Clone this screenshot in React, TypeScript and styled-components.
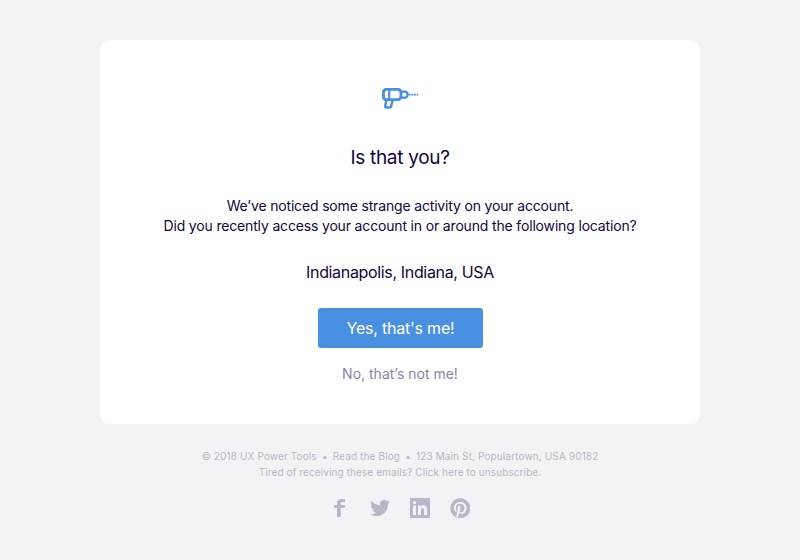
import React from "react";
import styled, { createGlobalStyle } from "styled-components";
import { FaTwitter, FaPinterest } from "react-icons/fa";

const GlobalStyle = createGlobalStyle`
  * { box-sizing: border-box; }
  body {
    margin: 0;
    background: #f3f3f5;
    color: #130540;
    font-family: Inter, "Liberation Sans", sans-serif;
  }
`;

const Page = styled.div`
  display: flex;
  flex-direction: column;
  align-items: center;
  height: 560px;
  padding-top: 40px;
  overflow: hidden;
`;

const Card = styled.main`
  display: flex;
  flex-direction: column;
  align-items: center;
  width: 600px;
  height: 384px;
  padding-top: 44px;
  background: #fff;
  border-radius: 10px;
`;

const Drill = styled.svg`
  display: block;
  width: 40px;
  height: 28px;
`;

const Line = styled.p<{ $size: number; $height: number; $top?: number; $spacing?: number }>`
  margin: ${({ $top = 0 }) => $top}px 0 0;
  font-size: ${({ $size }) => $size}px;
  font-weight: 400;
  line-height: ${({ $height }) => $height}px;
  letter-spacing: ${({ $spacing = 0 }) => $spacing}px;
  white-space: pre;
`;

const Separator = styled.span`
  letter-spacing: -0.2px;
`;

const Confirm = styled.button`
  width: 165px;
  height: 40px;
  margin: 24px 0 0 1px;
  padding: 0;
  border: 0;
  border-radius: 3px;
  background: #4a90e2;
  color: #fff;
  font: 400 16px/40px Inter, sans-serif;
  letter-spacing: -0.22px;
`;

const Deny = styled.a`
  margin-top: 16px;
  color: #8c84a2;
  font-size: 14px;
  line-height: 20px;
`;

const Footer = styled.footer`
  display: flex;
  flex-direction: column;
  align-items: center;
  margin-top: 24px;
  color: #bab5c7;
`;

const Social = styled.nav`
  display: flex;
  gap: 20px;
  margin-top: 18px;
`;

const SocialLink = styled.a`
  display: flex;
  align-items: center;
  justify-content: center;
  width: 20px;
  height: 20px;
  svg { flex: none; }
`;

export default function App() {
  return (
    <Page>
      <GlobalStyle />
      <Card>
        <Drill viewBox="0 0 40 28" fill="none" stroke="#4a90e2" strokeWidth="2.9" strokeLinejoin="round">
          <path d="M5.3 5.4H18.8L21 7.6V13.4L18.8 15.6H5.3L3.5 13.8V7.2Z" />
          <path d="M9.2 5V16" strokeWidth="2.2" />
          <path d="M21.5 7.6H25.8L27.4 9.2V12L25.8 13.6H21.5" strokeWidth="2.4" />
          <path d="M6.4 16L5.3 21.8Q5.1 23.6 6.6 23.6H9.6Q10.8 23.6 11.1 22.2L12.7 16" strokeWidth="2.5" />
          <path d="M28.6 10.6H38.2" strokeWidth="1.6" strokeDasharray="1.9 .8" />
        </Drill>
        <Line as="h1" $size={19} $height={24} $top={34} $spacing={-0.3}>Is that you?</Line>
        <Line $size={14} $height={20} $top={26} $spacing={-0.165}>We’ve noticed some strange activity on your account.</Line>
        <Line $size={14} $height={20} $spacing={-0.165}>Did you recently access your account in or around the following location?</Line>
        <Line $size={16} $height={24} $top={24} $spacing={-0.34}>Indianapolis, Indiana, USA</Line>
        <Confirm>Yes, that's me!</Confirm>
        <Deny>No, that’s not me!</Deny>
      </Card>
      <Footer>
        <Line $size={10} $height={16} $spacing={0.13}>
          © 2018 UX Power Tools<Separator>{"  •  "}</Separator>Read the Blog<Separator>{"  •  "}</Separator>123 Main St, Populartown, USA 90182
        </Line>
        <Line $size={10} $height={16} $spacing={0.1}>Tired of receiving these emails? Click here to unsubscribe.</Line>
        <Social>
          <SocialLink>
            <svg width="20" height="20" viewBox="0 0 20 20" fill="currentColor">
              <path d="M7 19V10H4V6.9H7V5.1C7 2.5 8.6 1 11.3 1H15V4.1H12.5C11.3 4.1 10.7 4.7 10.7 5.7V6.9H15L14.6 10H10.7V19Z" />
            </svg>
          </SocialLink>
          <SocialLink><FaTwitter size={20} /></SocialLink>
          <SocialLink>
            <svg width="20" height="20" viewBox="0 0 20 20" fill="currentColor">
              <path fillRule="evenodd" d="M1 0H19Q20 0 20 1V19Q20 20 19 20H1Q0 20 0 19V1Q0 0 1 0ZM3 7.6V17H6V7.6ZM4.5 2.9A1.7 1.7 0 1 0 4.5 6.3A1.7 1.7 0 1 0 4.5 2.9ZM8 7.6V17H11V12.2C11 10.8 11.6 10 12.7 10C13.8 10 14.1 10.9 14.1 12.2V17H17V11.7C17 9 16.2 7.3 13.6 7.3C12.3 7.3 11.4 8 10.9 8.8V7.6Z" />
            </svg>
          </SocialLink>
          <SocialLink><FaPinterest size={20.6} /></SocialLink>
        </Social>
      </Footer>
    </Page>
  );
}
